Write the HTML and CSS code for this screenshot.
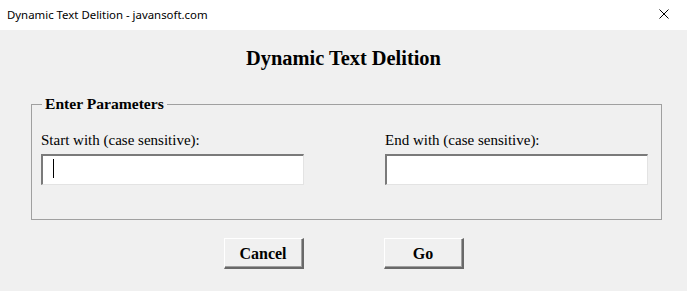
FILE: index.html
```html
<!DOCTYPE html>
<html lang="en">
  <head>
    <meta charset="UTF-8" />
    <title>Dynamic Text Delition - javansoft.com</title>
    <link rel="stylesheet" href="styles.css">
  </head>
  <body>
    <div class="window">
      <div class="titlebar">
        <span class="title">Dynamic Text Delition - javansoft.com</span>
        <svg class="close" viewBox="0 0 10 10" width="10" height="10">
          <path d="M0.5,0.5 L9.5,9.5 M9.5,0.5 L0.5,9.5" stroke="#000" stroke-width="1" fill="none" />
        </svg>
      </div>
      <div class="content">
        <h1>Dynamic Text Delition</h1>
        <fieldset class="params">
          <legend>Enter Parameters</legend>
          <div class="form-element">
            <label for="start_with">Start with (case sensitive):</label>
            <div class="field">
              <input type="text" id="start_with" name="start_with" />
              <span class="caret"></span>
            </div>
          </div>
          <div class="form-element">
            <label for="end_with">End with (case sensitive):</label>
            <div class="field">
              <input type="text" id="end_with" name="end_with" />
            </div>
          </div>
        </fieldset>
        <div class="buttons">
          <button class="btn">Cancel</button>
          <button class="btn">Go</button>
        </div>
      </div>
    </div>
  </body>
</html>
```

FILE: styles.css
```css
* {
  box-sizing: border-box;
}

html,
body {
  margin: 0;
  padding: 0;
  width: 100%;
  height: 100%;
  background-color: #f0f0f0;
}

body {
  font-family: "Liberation Serif", "Times New Roman", serif;
  color: #000;
}

.window {
  display: flex;
  flex-direction: column;
  height: 100%;
}

.titlebar {
  height: 30px;
  background-color: #fff;
  display: flex;
  align-items: center;
  justify-content: space-between;
  padding: 0 18px 0 7px;
}

.title {
  font-family: "Noto Sans", "Liberation Sans", sans-serif;
  font-size: 11.4px;
  line-height: 16px;
}

.close {
  display: block;
  margin-top: -2px;
}

.content {
  flex: 1;
  padding-top: 16px;
}

h1 {
  margin: 0;
  text-align: center;
  font-size: 20.4px;
  line-height: 24px;
  font-weight: 700;
}

.params {
  margin: 25px 0 0 31px;
  width: 631px;
  padding: 18px 13px 34px 9px;
  border: 1px solid #a0a0a0;
  display: grid;
  grid-template-columns: 263px 263px;
  justify-content: space-between;
}

.params legend {
  padding: 0 3px;
  margin-left: 1px;
  font-size: 15.6px;
  line-height: 18px;
  font-weight: 700;
}

.form-element label {
  display: block;
  font-size: 15px;
  line-height: 18px;
  margin-bottom: 5px;
}

.field {
  position: relative;
}

.field input {
  display: block;
  width: 263px;
  height: 31px;
  margin: 0;
  padding: 0 8px;
  font-family: inherit;
  font-size: 15px;
  background-color: #fff;
  border-style: solid;
  border-width: 2px 1px 1px 2px;
  border-color: #7a7a7a #e3e3e3 #e3e3e3 #7a7a7a;
  outline: none;
}

.caret {
  position: absolute;
  left: 12px;
  top: 5px;
  width: 1px;
  height: 19px;
  background-color: #000;
}

.buttons {
  display: flex;
  justify-content: center;
  gap: 80px;
  margin-top: 18px;
}

.btn {
  width: 80px;
  height: 31px;
  padding: 2px 0 0;
  font-family: inherit;
  font-size: 16px;
  font-weight: 700;
  color: #000;
  background-color: #f0f0f0;
  border-style: solid;
  border-width: 1px 2px 2px 1px;
  border-color: #fff #696969 #696969 #fff;
  box-shadow: inset -1px -1px 0 #a0a0a0;
  cursor: pointer;
}
```
